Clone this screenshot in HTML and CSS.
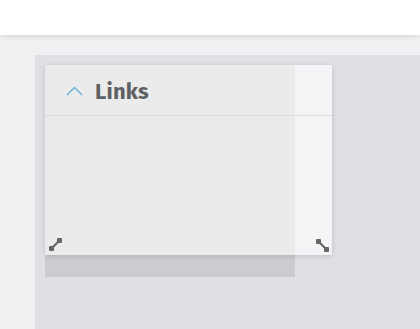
FILE: index.html
```html
<!DOCTYPE html>
<html>
<head>
<meta charset="utf-8">
<link rel="stylesheet" href="styles.css">
</head>
<body>
<header class="topbar"></header>
<main class="page">
  <section class="canvas">
    <div class="widget">
      <div class="card">
        <div class="card-head">
          <svg class="chev" width="17" height="10" viewBox="0 0 17 10"><path d="M1 9 L8.5 1.5 L16 9" fill="none" stroke="#67afdc" stroke-width="1.4"/></svg>
          <span class="title">Links</span>
        </div>
        <div class="card-body"></div>
        <svg class="rs rs-left" width="13" height="13" viewBox="0 0 13 13"><path d="M2.5 10.5 L10.5 2.5" stroke="#666" stroke-width="2.2"/><rect x="0" y="8" width="5" height="5" rx="1" fill="#666"/><rect x="8" y="0" width="5" height="5" rx="1" fill="#666"/></svg>
        <svg class="rs rs-right" width="13" height="13" viewBox="0 0 13 13"><path d="M2.5 2.5 L10.5 10.5" stroke="#666" stroke-width="2.2"/><rect x="0" y="0" width="5" height="5" rx="1" fill="#666"/><rect x="8" y="8" width="5" height="5" rx="1" fill="#666"/></svg>
      </div>
      <div class="ghost"></div>
    </div>
  </section>
</main>
</body>
</html>
```
FILE: styles.css
```css
html, body {
  margin: 0;
  padding: 0;
  height: 100%;
}
body {
  background: #eff0f2;
  font-family: "Fira Sans", Roboto, "Open Sans", sans-serif;
  display: flex;
  flex-direction: column;
  overflow: hidden;
}
.topbar {
  height: 35px;
  background: #ffffff;
  box-shadow: 0 1px 6px rgba(0, 0, 0, 0.12);
  position: relative;
  z-index: 2;
  flex: none;
}
.page {
  flex: 1;
  display: flex;
  padding: 20px 0 0 35px;
}
.canvas {
  flex: 1;
  background: #dfe0e3;
  padding: 10px;
}
.widget {
  width: 287px;
}
.card {
  position: relative;
  height: 190px;
  background: linear-gradient(to right, #ebebeb 250px, #f3f4f6 250px);
  box-shadow: 0 1px 5px rgba(0, 0, 0, 0.14);
  display: flex;
  flex-direction: column;
  z-index: 1;
}
.card-head {
  height: 51px;
  box-sizing: border-box;
  padding-top: 2px;
  border-bottom: 1px solid #dbdbdb;
  display: flex;
  align-items: center;
  padding-left: 21px;
  gap: 12px;
}
.chev {
  margin-top: -1px;
}
.title {
  font-size: 22px;
  font-weight: 700;
  color: #5e6064;
  letter-spacing: 0.2px;
}
.card-body {
  flex: 1;
}
.rs {
  position: absolute;
  bottom: 4px;
}
.rs-left {
  left: 4px;
}
.rs-right {
  right: 3px;
  bottom: 3px;
}
.ghost {
  width: 250px;
  height: 22px;
  background: #cbccd0;
}
```
